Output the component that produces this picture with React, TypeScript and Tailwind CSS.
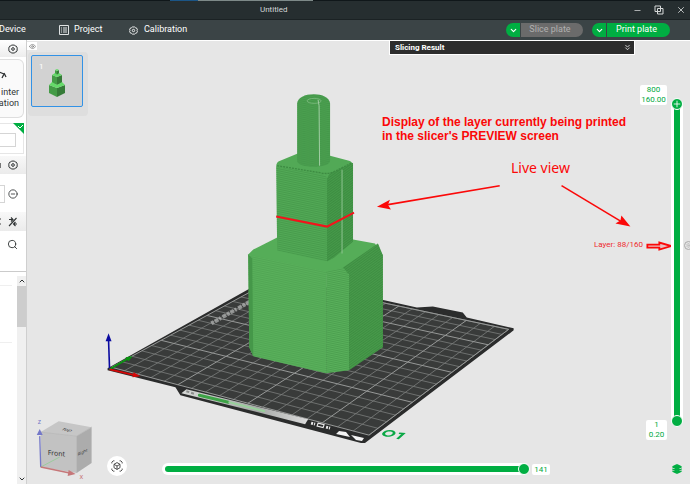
import { ChevronDown, ChevronUp, ChevronsDown, CircleMinus, Eye, Layers, Minus, Plus, Search, Settings, X } from "lucide-react"

type Point = [number, number];

// Corners of the printable area: left, front, right, back
const corners: Point[] = [[111, 367], [369, 435], [509, 329], [273, 279]];
const CELLS = 18;

// Maps a unit square position onto the bed as seen by the camera
function project(u: number, v: number): Point {
  const [[x0, y0], [x1, y1], [x2, y2], [x3, y3]] = corners;
  const dx1 = x1 - x2, dx2 = x3 - x2, sx = x0 - x1 + x2 - x3;
  const dy1 = y1 - y2, dy2 = y3 - y2, sy = y0 - y1 + y2 - y3;
  const det = dx1 * dy2 - dx2 * dy1;
  const g = (sx * dy2 - dx2 * sy) / det;
  const h = (dx1 * sy - sx * dy1) / det;
  const w = g * u + h * v + 1;
  return [
    ((x1 - x0 + g * x1) * u + (x3 - x0 + h * x3) * v + x0) / w,
    ((y1 - y0 + g * y1) * u + (y3 - y0 + h * y3) * v + y0) / w,
  ];
}

function gridPath(indexes: number[]) {
  return indexes.map((i) => {
    const t = i / CELLS;
    return `M${project(t, 0)}L${project(t, 1)}M${project(0, t)}L${project(1, t)}`;
  }).join("");
}

const all = Array.from({ length: CELLS + 1 }, (_, i) => i);
const minorLines = gridPath(all.filter((i) => i % 5 !== 0));
const majorLines = gridPath([0, 5, 10, 15, 18]);

function Bed() {
  return (
    <g>
      <path d="M107 368 L273 275 L417 307 L433 306 L463 312 L467 317 L514 328 L514 330 L365 443 L361 443 L180 395 L175 387 L107 370Z" fill="#2b2c2c" />
      <path d="M111 367 L273 279 L509 329 L369 435Z" fill="#393b3a" />
      <path d={minorLines} stroke="#7b7d7c" strokeWidth=".8" fill="none" />
      <path d={majorLines} stroke="#979998" strokeWidth="1" fill="none" />
      <path d="M211 323 L250 301" stroke="#b4b6b5" strokeWidth="4" strokeDasharray="3 1 4 1 2 2 4 1" opacity=".7" />
      <path d="M186 389 L308 419 L305 424 L181 393Z" fill="url(#strip)" />
      <path d="M186 391 L195 394" stroke="#8b8d8c" strokeWidth="2" strokeDasharray="3 2" />
      <path d="M199 395 L228 402" stroke="#3ea347" strokeWidth="3" strokeLinecap="round" />
      <path d="M229 402 L264 411" stroke="#98cf9b" strokeWidth="2" strokeLinecap="round" />
      <path d="M311 423 l4 1 M326 427 l4 1" stroke="#e8e8e8" strokeWidth="3" strokeDasharray="2 1" />
      <path d="M318 423 l6 1.500 -1 3 -6 -1.500z" fill="none" stroke="#e8e8e8" strokeWidth="1.2" />
      <path d="M339 431 L346 432 L350 437 L336 434Z M351 435 L364 438 L362 441 L356 440Z" fill="#f4f4f4" />
      <g transform="matrix(1 .22 -.55 .5 384 431)" fill="none" stroke="#0aa845" strokeWidth="2.6">
        <ellipse cx="6" cy="2" rx="4.5" ry="5" />
        <path d="M14 -2 L18 -3 L18 8" />
      </g>
      <path d="M109 369 L108 340" stroke="#0a0aa0" strokeWidth="1.6" />
      <path d="M105 341 L108 333 L111 341Z" fill="#0a0aa0" />
      <path d="M109 369 L128 358" stroke="#08950f" strokeWidth="1.8" />
      <path d="M125 357 L132 356 L128 361Z" fill="#08950f" />
      <path d="M109 369 L134 375" stroke="#d40808" strokeWidth="1.8" />
      <path d="M133 372 L140 376 L132 377Z" fill="#d40808" />
    </g>
  )
}

function Model() {
  const left = "M248 254 L326 271 L326 373 L253 356 L249 347Z";
  const chamfer = "M326 271 L343 267 L349 274 L349 370 L326 373Z";
  const right = "M343 267 L378 243 L383 255 L383 347 L349 370 L349 274Z";
  return (
    <g>
      <path d="M248 254 L253 249 L277 237 L353 239 L375 243 L383 255 L349 274 L326 273 L248 256Z" fill="#55ad58" />
      <path d={left} fill="#59b05b" />
      <path d={left} fill="url(#layersLeft)" opacity=".6" />
      <path d="M248 254 L252 258 L253 356 L249 347Z" fill="#459749" />
      <path d={chamfer} fill="#59b05b" />
      <path d={chamfer} fill="url(#layersLeft)" />
      <path d={right} fill="#489b4b" />
      <path d={right} fill="url(#layersRight)" />
      <path d="M276 166 Q276 161 280 160 L297 153 L330 155 L349 160 Q353 161 353 166 L353 241 L334 257 Q326 262 318 259 L277 250Z" fill="#52a956" />
      <path d="M276 166 L320 173 Q327 174 327 178 L327 261 L277 250Z" fill="url(#layersLeft)" />
      <path d="M327 178 Q329 172 334 171 L353 162 L353 241 L334 257 L327 261Z" fill="#469a4a" />
      <path d="M327 178 Q329 172 334 171 L353 162 L353 241 L334 257 L327 261Z" fill="url(#layersRight)" />
      <path d="M277 165 L320 172 Q328 174 334 171 L352 162" fill="none" stroke="#3d8b42" strokeWidth="1.3" strokeDasharray="2 1" />
      <path d="M342 169 L342 253" stroke="#8fc492" strokeWidth="1" />
      <path d="M297 103 C297 90 330 90 330 103 L330 160 C330 168 297 168 297 160Z" fill="#4ca251" />
      <path d="M297 103 C297 90 330 90 330 103 L330 160 C330 168 297 168 297 160Z" fill="url(#layersRound)" />
      <ellipse cx="314" cy="100" rx="7" ry="2.5" fill="none" stroke="#80bd82" strokeWidth=".8" />
      <path d="M318 99 L319 105 L319.500 165" fill="none" stroke="#a1cda3" strokeWidth="1" />
      <path d="M276 216 L327 226 L354 212" fill="none" stroke="#f5121b" strokeWidth="2" />
    </g>
  )
}

function NavCube() {
  return (
    <g>
      <path d="M40 432 L58 421 L91 427 L76 436Z" fill="#c6c6c6" />
      <path d="M40 432 L76 436 L76 473 L40 467Z" fill="#c2c2c2" />
      <path d="M76 436 L91 427 L91 463 L76 473Z" fill="#acacac" />
      <path d="M40 432 L76 436 L91 427 M76 436 L76 473" fill="none" stroke="#b8b8b8" strokeWidth=".8" />
      <path d="M40 467 L39 436" stroke="#7478c8" strokeWidth="1.3" />
      <path d="M36 435 L39 429 L42 435Z" fill="#7478c8" />
      <path d="M40 467 L59 457" stroke="#9bcb9d" strokeWidth="1" />
      <path d="M40 467 L69 473" stroke="#c67779" strokeWidth="1.5" />
      <path d="M68 470 L75 474 L67 476Z" fill="#c67779" />
      <g fontFamily="Noto Sans, sans-serif">
        <text x="37" y="424" fontSize="7" fill="#7478c8">z</text>
        <text x="79" y="479" fontSize="7" fill="#c67779">x</text>
        <text transform="matrix(1 .08 0 1 47 455)" fontSize="7" fill="#333">Front</text>
        <text transform="matrix(1 -.5 0 1 77 456)" fontSize="4" fill="#333">Right</text>
        <text transform="matrix(1 .15 -.6 .5 60 430)" fontSize="6" fill="#333">Top</text>
      </g>
    </g>
  )
}

function Annotations() {
  return (
    <g stroke="#fb0808" fill="#fb0808">
      <path d="M500 185 L388 204" strokeWidth="1.6" />
      <path d="M377 206 L390 199 L388 204 L391 209Z" stroke="none" />
      <path d="M562 185 L622 221" strokeWidth="1.6" />
      <path d="M631 226 L616 223 L621 220 L622 215Z" stroke="none" />
      <path d="M648 244 L660 244 L660 242 L672 245.500 L660 249 L660 247 L648 247Z" fill="#e8bfc0" strokeWidth="1.8" />
    </g>
  )
}

function Scene() {
  return (
    <svg viewBox="27 40 663 444" className="absolute inset-0 h-full w-full" aria-hidden="true">
      <defs>
        <pattern id="layersLeft" width="4" height="2" patternUnits="userSpaceOnUse" patternTransform="rotate(12)">
          <path d="M0 .5H4" stroke="#39883e" strokeWidth=".8" opacity=".5" />
        </pattern>
        <pattern id="layersRight" width="4" height="2" patternUnits="userSpaceOnUse" patternTransform="rotate(-36)">
          <path d="M0 .5H4" stroke="#2f7834" strokeWidth=".8" opacity=".5" />
        </pattern>
        <pattern id="layersRound" width="8" height="2" patternUnits="userSpaceOnUse">
          <path d="M0 .5Q4 2 8 .5" fill="none" stroke="#347f39" strokeWidth=".8" opacity=".5" />
        </pattern>
        <linearGradient id="strip">
          <stop offset="0" stopColor="#d6d8d6" />
          <stop offset=".6" stopColor="#a5a8a6" />
          <stop offset="1" stopColor="#dcdcdc" />
        </linearGradient>
      </defs>
      <Bed />
      <Model />
      <NavCube />
      <Annotations />
    </svg>
  )
}

function NutIcon({ className = "" }) {
  return (
    <svg viewBox="0 0 12 12" className={className} fill="none" stroke="currentColor" strokeWidth="1.2" strokeLinejoin="round">
      <path d="M4.500 1.300 L7.500 1.300 L8.500 2.200 L10 2.600 L11.200 5 L10.700 6 L11.200 7.200 L10 9.500 L8.500 9.900 L7.500 10.800 L4.500 10.800 L3.500 9.900 L2 9.500 L.8 7.200 L1.300 6 L.8 5 L2 2.600 L3.500 2.200Z" />
      <circle cx="6" cy="6" r="1.600" />
    </svg>
  )
}

function TitleBar() {
  return (
    <header className="text-white">
      <div className="flex h-px bg-[#10171a]">
        <div className="ml-[170px] w-7 bg-[#1b5586]"></div>
        <div className="w-[115px] bg-[#7d8988]"></div>
      </div>
      <div className="relative flex h-[18px] items-center justify-end gap-3 bg-[#262e30] pr-1 text-[#d5d8d8]">
        <h1 className="absolute left-[260px] text-[8px]">Untitled</h1>
        <button aria-label="Minimize"><Minus size={9} strokeWidth={2} /></button>
        <button aria-label="Restore">
          <svg viewBox="0 0 10 10" className="size-[10px]" fill="none" stroke="currentColor" strokeWidth="1">
            <path d="M1 1H6.500V6.500H1Z M3.500 3.500H9V9H3.500Z" />
          </svg>
        </button>
        <button aria-label="Close"><X size={10} strokeWidth={2} /></button>
      </div>
      <div className="flex h-[21px] items-center border-t border-[#1b2224] bg-[#3b4446] pr-5 text-[9px]">
        <nav className="flex flex-1 items-center">
          <a href="#device" className="-ml-px w-[60px]">Device</a>
          <a href="#project" className="flex w-[70px] items-center gap-[5px]">
            <svg viewBox="0 0 10 10" className="size-[10px]" fill="none" stroke="#dfe2e2" strokeWidth="1">
              <path d="M.5 .5H9.500V9.500H.5Z M2 3H3 M4 3H8 M2 5H3 M4 5H8 M2 7H3 M4 7H8" />
            </svg>
            Project
          </a>
          <a href="#calibration" className="flex items-center gap-[6px]">
            <NutIcon className="size-[9px]" />
            Calibration
          </a>
        </nav>
        <div className="flex gap-[9px]">
          <div className="flex h-[14px] gap-px">
            <button aria-label="Slice options" className="flex w-[14px] items-center justify-center rounded-l-full bg-[#00ae42]"><ChevronDown size={9} strokeWidth={3} /></button>
            <button className="w-[62px] rounded-r-full bg-[#6b6b6b] pr-1 text-[#b0b0b0]">Slice plate</button>
          </div>
          <div className="flex h-[14px] gap-px">
            <button aria-label="Print options" className="flex w-[14px] items-center justify-center rounded-l-full bg-[#00ae42]"><ChevronDown size={9} strokeWidth={3} /></button>
            <button className="w-[63px] rounded-r-full bg-[#00ae42] pr-1 text-white">Print plate</button>
          </div>
        </div>
      </div>
    </header>
  )
}

function Sidebar() {
  return (
    <aside className="flex w-[27px] shrink-0 flex-col overflow-hidden border-r border-[#cfcfcf] bg-white text-[#303435]">
      <div className="flex h-[17px] items-center justify-end bg-linear-to-b from-white to-[#ededed] pr-2">
        <NutIcon className="size-[10px]" />
      </div>
      <button className="mt-[2px] mr-[2px] flex h-[59px] flex-col items-end justify-end rounded-r-md border border-l-0 border-[#dedede] bg-[#fafafa] pr-1 pb-2 text-[9px] leading-[11px]">
        <svg viewBox="0 0 8 10" className="mr-3 mb-[7px] h-[10px] w-2" fill="none" stroke="currentColor" strokeWidth="1.3">
          <path d="M0 2L5 4L3 8 M5 3L7 7" />
        </svg>
        <span>inter</span>
        <span>ation</span>
      </button>
      <div className="relative mt-[5px] mr-[2px] h-[31px] border border-l-0 border-[#e6e6e6]">
        <input aria-label="Plate type" className="mt-[9px] block h-[14px] w-4 border border-l-0 border-[#d5d5d5]" />
        <svg viewBox="0 0 11 11" className="absolute -top-px -right-px size-[11px]">
          <path d="M0 0H11V11Z" fill="#00ae42" />
          <path d="M5 3L7 5L10 2" fill="none" stroke="#fff" strokeWidth="1" />
        </svg>
      </div>
      <div className="mt-[2px] flex h-[18px] items-center bg-linear-to-b from-[#f8f8f8] to-[#ebebeb]">
        <div className="mr-[7px] h-[5px] w-px bg-[#777]"></div>
        <NutIcon className="size-[10px]" />
      </div>
      <div className="mt-[11px] flex h-[18px] items-center gap-[3px]">
        <input aria-label="Filament" className="h-[18px] w-[5px] border border-l-0 border-[#d5d5d5]" />
        <CircleMinus size={10} strokeWidth={2} />
      </div>
      <div className="mt-[9px] flex h-[19px] items-center bg-linear-to-b from-[#f8f8f8] to-[#ebebeb]">
        <div className="mr-[7px] h-[7px] w-px border-y-2 border-[#999]"></div>
        <svg viewBox="0 0 10 10" className="size-[10px]" fill="none" stroke="currentColor" strokeWidth="1.1">
          <path d="M1 9L8.500 1 M1 2.500H5 M3 .5L5 2.500L3 4.500 M9 7H5.500 M7.500 5L5.500 7L7.500 9" />
        </svg>
      </div>
      <div className="flex h-[41px] justify-end border-b border-[#cbcbcb] pt-2 pr-2">
        <button aria-label="Search" className="self-start"><Search size={11} strokeWidth={2} /></button>
      </div>
      <div className="mt-1 flex flex-1">
        <div className="mt-[9px] w-3 self-start border-y border-[#efefef] pt-14"></div>
        <div className="ml-auto flex w-[9px] flex-col items-center bg-[#f0f0f0]">
          <ChevronUp size={8} strokeWidth={3} className="my-px" />
          <div className="h-[41px] w-full bg-[#cdcdcd]"></div>
          <ChevronDown size={8} strokeWidth={3} className="mt-auto mb-px" />
        </div>
      </div>
    </aside>
  )
}

function PlateList() {
  return (
    <div className="absolute top-px left-0">
      <button aria-label="Show plates" className="flex h-2 w-[10px] items-center justify-center bg-white text-[#666]"><Eye size={7} /></button>
      <div className="mt-[2px] ml-px rounded-sm bg-[#dedede] pt-[3px] pr-[5px] pb-[9px] pl-[3px]">
        <button className="relative flex size-[52px] items-center justify-center rounded-xs border border-[#3292e6] bg-[#d2d2d2]">
          <span className="absolute top-[5px] left-[7px] text-[8px] text-white">1</span>
          <svg viewBox="0 0 16 28" className="mt-1 h-7 w-4">
            <path d="M0 16L8 19L8 28L0 24Z M3 6L8 8L8 16L3 14Z M6 1L8 2V6L6 5Z" fill="#449b46" />
            <path d="M8 19L16 16V24L8 28Z M8 8L13 6V14L8 16Z M8 2L10 1V5L8 6Z" fill="#367b38" />
            <path d="M0 16L3 13L8 16L13 13L16 16L8 19Z M3 6L6 4L8 6L10 4L13 6L8 8Z M6 1L8 0L10 1L8 2Z" fill="#65da69" />
          </svg>
        </button>
      </div>
    </div>
  )
}

function LayerSlider() {
  const thumb = "absolute inset-0 w-3 cursor-pointer appearance-none bg-transparent [direction:rtl] [writing-mode:vertical-lr] [&::-webkit-slider-thumb]:size-3 [&::-webkit-slider-thumb]:appearance-none [&::-webkit-slider-thumb]:rounded-full [&::-webkit-slider-thumb]:border [&::-webkit-slider-thumb]:border-white [&::-webkit-slider-thumb]:bg-[#00ae42]"
  return (
    <div className="absolute top-[57px] right-[7px] bottom-[57px] w-3">
      <div className="absolute inset-y-1 inset-x-0 flex justify-center bg-white px-[3px]">
        <div className="w-full bg-[#00ae42]"></div>
      </div>
      <input type="range" aria-label="Bottom layer" min={1} max={800} defaultValue={1} className={`${thumb} h-full`} />
      <input type="range" aria-label="Top layer" min={1} max={800} defaultValue={800} className={`${thumb} h-full`} />
      <Plus size={10} strokeWidth={2} className="pointer-events-none absolute top-px left-px text-white" />
      <output className="absolute -top-[13px] right-4 flex w-[27px] flex-col rounded-xs bg-white text-center text-[8px] leading-[10px] text-[#00a840]">
        <span>800</span>
        <span>160.00</span>
      </output>
      <output className="absolute right-4 -bottom-[13px] flex w-[21px] flex-col rounded-xs bg-white text-center text-[8px] leading-[10px] text-[#00a840]">
        <span>1</span>
        <span>0.20</span>
      </output>
    </div>
  )
}

function MoveSlider() {
  return (
    <div className="absolute right-[140px] bottom-[9px] left-[135px] flex items-center gap-[2px]">
      <div className="relative h-3 flex-1 rounded-full bg-white p-[3px]">
        <div className="h-full rounded-full bg-[#00ae42]"></div>
        <input type="range" aria-label="Move" min={0} max={141} defaultValue={141} className="absolute inset-0 h-3 w-full cursor-pointer appearance-none bg-transparent [&::-webkit-slider-thumb]:size-3 [&::-webkit-slider-thumb]:appearance-none [&::-webkit-slider-thumb]:rounded-full [&::-webkit-slider-thumb]:border [&::-webkit-slider-thumb]:border-white [&::-webkit-slider-thumb]:bg-[#00ae42]" />
      </div>
      <output className="w-[18px] rounded-xs bg-white text-center text-[8px] leading-[11px] text-[#00a840]">141</output>
    </div>
  )
}

export default function App() {
  return (
    <div className="flex min-h-screen flex-col bg-[#e6e6e6] font-[Roboto,sans-serif]">
      <TitleBar />
      <div className="flex flex-1">
        <Sidebar />
        <main className="relative flex-1 overflow-hidden border-t border-white">
          <Scene />
          <PlateList />

          <button className="absolute top-0 right-14 flex h-[13px] w-[244px] items-center justify-between bg-[#2d2d2d] pr-[2px] pl-[5px] text-[8px] font-bold text-white outline outline-white">
            Slicing Result
            <ChevronsDown size={9} strokeWidth={2} />
          </button>

          <p className="absolute top-[74px] left-[355px] font-['Liberation_Sans',sans-serif] text-[12px] leading-[14px] font-bold whitespace-nowrap text-[#fb0808]">
            Display of the layer currently being printed<br />in the slicer's PREVIEW screen
          </p>
          <p className="absolute top-[117px] left-[484px] font-['Noto_Sans',sans-serif] text-[14px] leading-5 whitespace-nowrap text-[#fb0808]">Live view</p>
          <p className="absolute top-[198px] left-[567px] text-[8px] leading-3 whitespace-nowrap text-[#ee2a2e]">Layer: 88/160</p>

          <button aria-label="Fit view" className="absolute bottom-2 left-20 flex size-5 items-center justify-center rounded-full bg-white text-[#444]">
            <svg viewBox="0 0 14 14" className="size-3" fill="none" stroke="currentColor" strokeWidth="1.1">
              <path d="M1 4V2.500L2.500 1H4 M10 1H11.500L13 2.500V4 M13 10V11.500L11.500 13H10 M4 13H2.500L1 11.500V10" />
              <path d="M7 3L10.500 5V9L7 11L3.500 9V5Z M3.500 5L7 7L10.500 5 M7 7V11" />
            </svg>
          </button>
          <MoveSlider />
          <LayerSlider />
          <button aria-label="Layer options" className="absolute top-[200px] -right-[3px] size-[9px] rounded-full border border-[#aaa] text-[#aaa]">
            <Settings size={5} className="mx-auto" />
          </button>
          <button aria-label="Layers" className="absolute right-2 bottom-[10px] text-[#00ae42]"><Layers size={10} strokeWidth={3} fill="currentColor" /></button>
        </main>
      </div>
    </div>
  )
}
